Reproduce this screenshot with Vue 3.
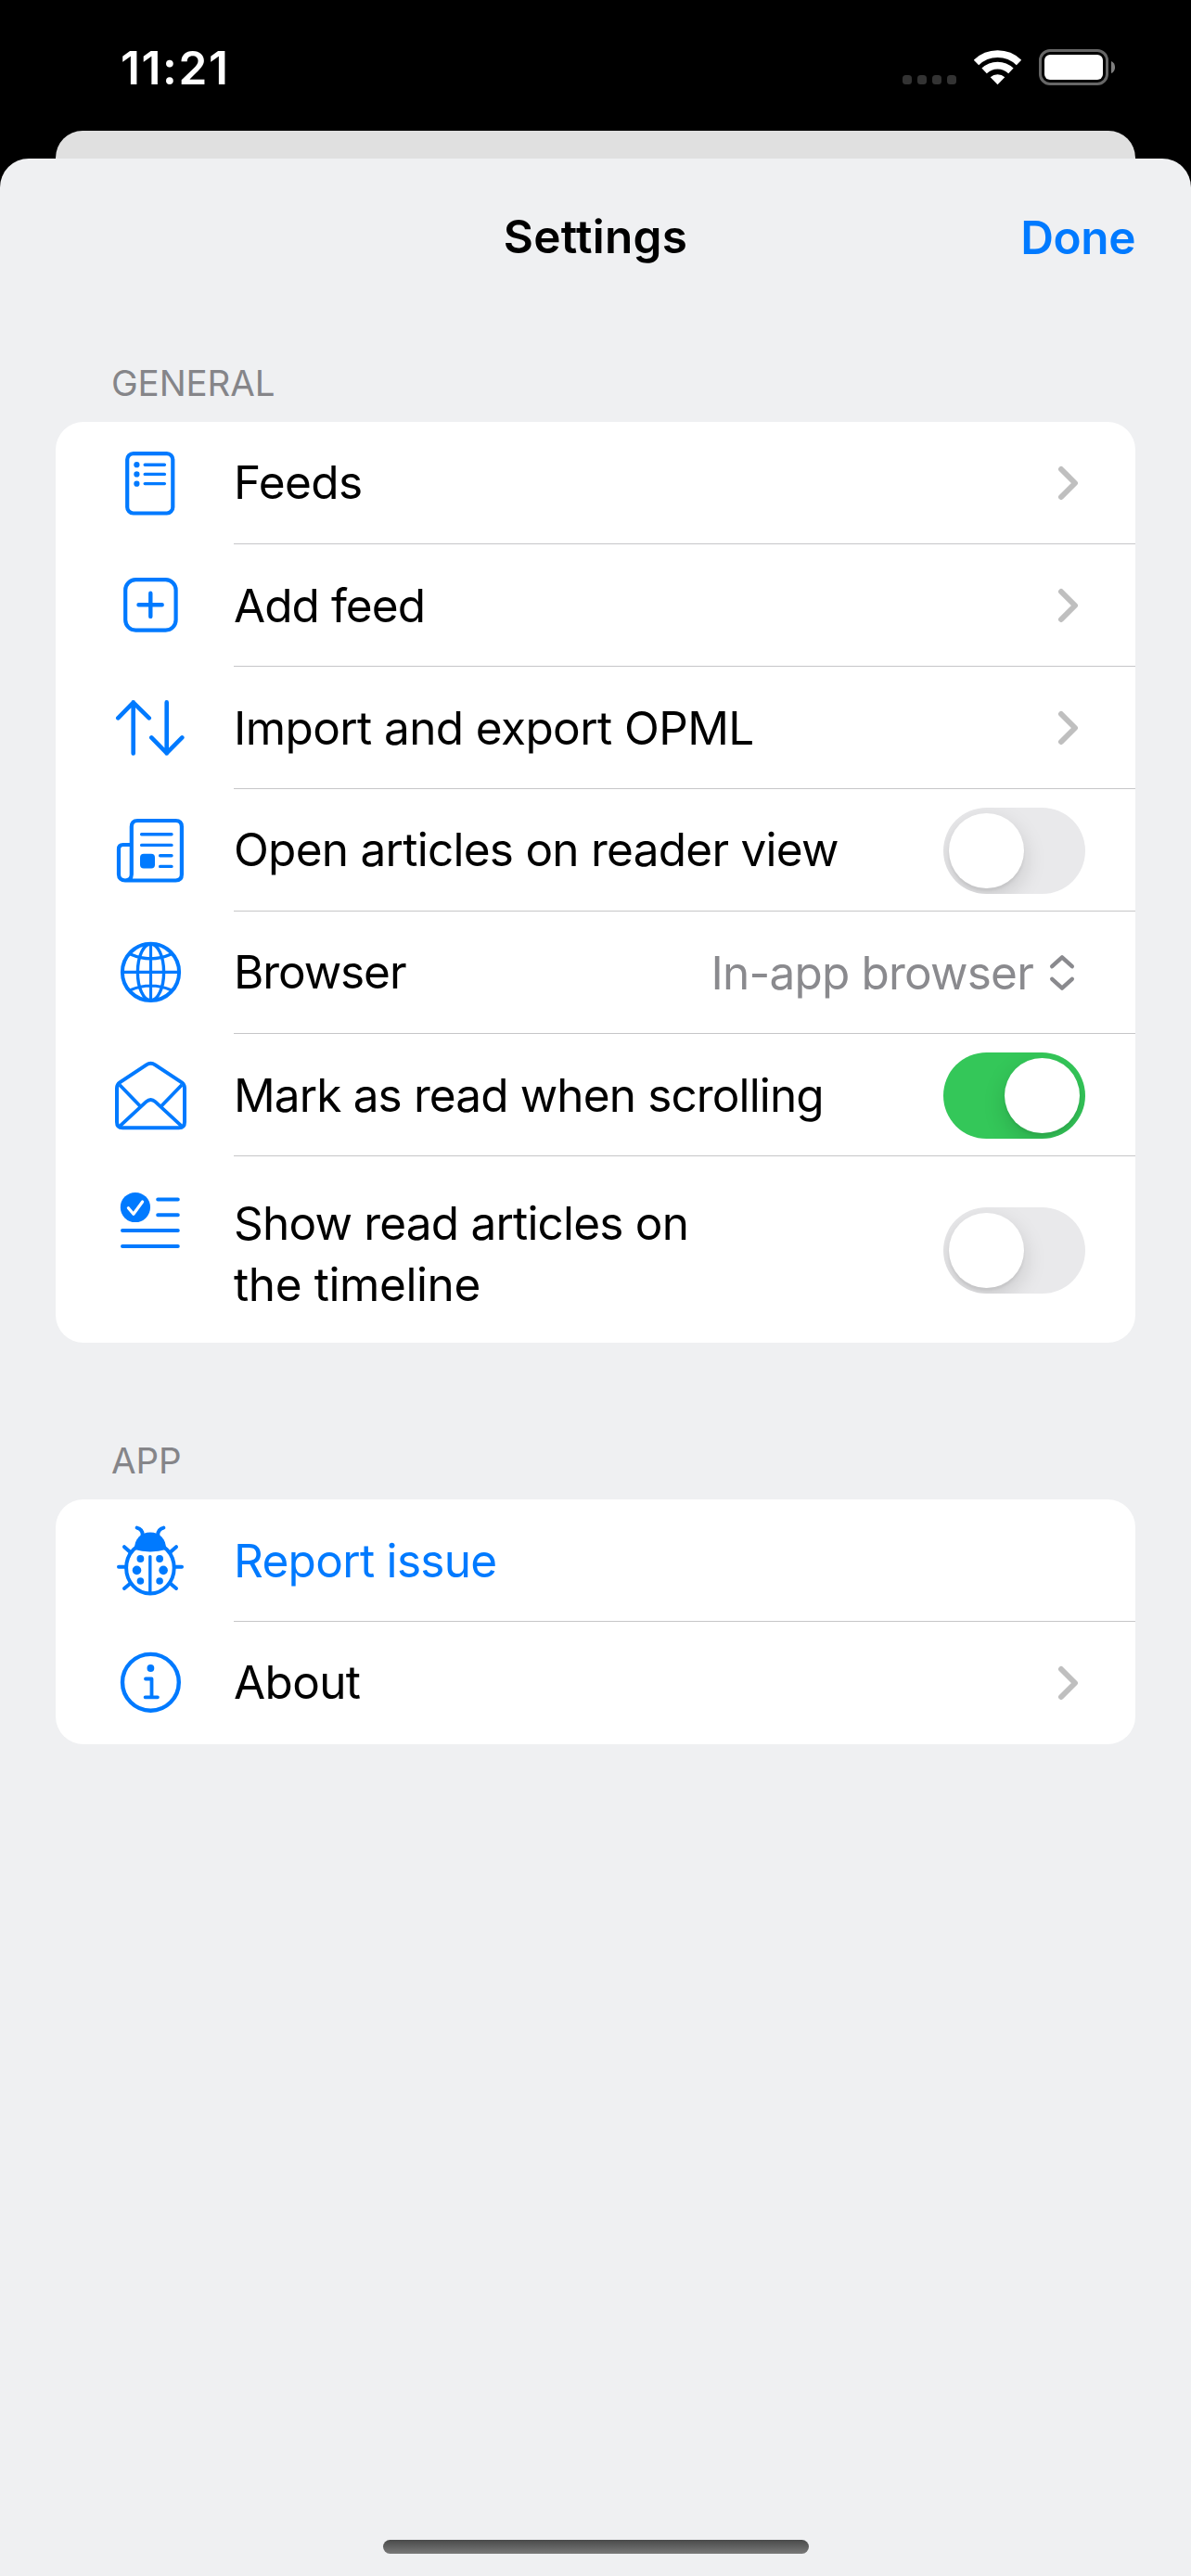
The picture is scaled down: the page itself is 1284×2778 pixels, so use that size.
<script setup>
const sections = [
  {
    title: 'GENERAL',
    titleClass: 't-general',
    rows: [
      { icon: 'feeds', lines: ['Feeds'], cls: 'l-feeds', kind: 'link' },
      { icon: 'add', lines: ['Add feed'], cls: 'l-add', kind: 'link' },
      { icon: 'arrows', lines: ['Import and export OPML'], cls: 'l-import', kind: 'link' },
      { icon: 'news', lines: ['Open articles on reader view'], cls: 'l-open', kind: 'toggle', on: false },
      { icon: 'globe', lines: ['Browser'], cls: 'l-browser', kind: 'picker', value: 'In-app browser' },
      { icon: 'mail', lines: ['Mark as read when scrolling'], cls: 'l-mark', kind: 'toggle', on: true },
      { icon: 'list', lines: ['Show read articles on', 'the timeline'], cls: 'l-show', kind: 'toggle', on: false, tall: true },
    ],
  },
  {
    title: 'APP',
    titleClass: 't-app',
    rows: [
      { icon: 'bug', lines: ['Report issue'], cls: 'l-report', kind: 'action' },
      { icon: 'info', lines: ['About'], cls: 'l-about', kind: 'link' },
    ],
  },
]
</script>

<template>
  <div class="screen">
    <header class="status">
      <span class="time">11:21</span>
      <div class="signals">
        <div class="dots"><i v-for="n in 4" :key="n"></i></div>
        <svg class="wifi" width="52" height="38" viewBox="0 0 52 38" fill="none" stroke="#fff" stroke-width="7.8">
          <path d="M2.5 13.5A33.1 33.1 0 0 1 48.5 13.5M11.1 22.4A20.7 20.7 0 0 1 39.9 22.4" />
          <path d="M25.5 37.3L17.7 29.2A11.5 11.5 0 0 1 33.3 29.2Z" fill="#fff" stroke="none" />
        </svg>
        <div class="battery"><div class="charge"></div></div>
        <svg class="nub" width="4" height="13" viewBox="0 0 4 13"><path d="M0 0C5.4 2 5.4 11 0 13Z" fill="#7f7f7f" /></svg>
      </div>
    </header>
    <div class="behind"></div>
    <main class="sheet">
      <nav class="bar">
        <span></span>
        <h1>Settings</h1>
        <a class="done">Done</a>
      </nav>
      <section v-for="s in sections" :key="s.title">
        <h2 :class="s.titleClass">{{ s.title }}</h2>
        <div class="card">
          <div v-for="r in s.rows" :key="r.cls" class="row" :class="{ tall: r.tall }">
            <svg class="icon" width="80" height="80" viewBox="0 0 80 80" fill="none" stroke="#007aff" stroke-width="4.2" stroke-linecap="round" stroke-linejoin="round">
              <template v-if="r.icon === 'feeds'">
                <rect x="15.2" y="8.1" width="49.1" height="64.4" rx="6.5" />
                <path d="M34.2 20.3H55.4M34.2 30.4H55.4M34.2 40.6H55.4" stroke-width="3.4" />
                <g fill="#007aff" stroke="none"><circle cx="25.4" cy="20.2" r="3.1" /><circle cx="25.4" cy="30.4" r="3.1" /><circle cx="25.4" cy="40.7" r="3.1" /></g>
              </template>
              <template v-else-if="r.icon === 'add'">
                <rect x="13.2" y="12.2" width="54.4" height="54.4" rx="11" />
                <path d="M27.5 39.3H52.7M40.3 26.8V51.9" stroke-width="4.4" />
              </template>
              <template v-else-if="r.icon === 'arrows'">
                <path d="M21.7 67.5V12.4M5.3 29.4L21.7 12.6L38.7 29.4M57.7 12.4V67.5M41.3 50.4L57.7 67.2L74.3 50.4" stroke-width="4.6" />
              </template>
              <template v-else-if="r.icon === 'news'">
                <path d="M19.8 66V14.5Q19.8 8 26.3 8H67.4Q73.9 8 73.9 14.5V66Q73.9 72.5 67.4 72.5H13C8.9 72.5 6 70 6 66V38.6Q6 34 10.6 34H19.8M19.8 66C19.8 70 17 72.5 13 72.5" />
                <path d="M30.6 22.8H63M30.6 34.4H63M50.6 45.8H63M50.6 57.4H63" stroke-width="3.4" />
                <rect x="29" y="43.8" width="16" height="15.6" rx="4" fill="#007aff" stroke="none" />
              </template>
              <template v-else-if="r.icon === 'globe'">
                <circle cx="40.5" cy="39.4" r="30.6" stroke-width="4" />
                <ellipse cx="40.5" cy="39.4" rx="14.1" ry="30.4" stroke-width="3.4" />
                <path d="M10 39.4H71M40.5 9V70M18.5 20Q40.5 29.6 62.5 20M18.5 58.8Q40.5 49.2 62.5 58.8" stroke-width="3.2" />
              </template>
              <template v-else-if="r.icon === 'mail'">
                <path d="M35.8 7.4Q40.5 4.2 45.2 7.4L73.6 26.2Q77 28.5 77 32.5V69Q77 75.2 70.8 75.2H10.2Q4 75.2 4 69V32.5Q4 28.5 7.4 26.2Z" stroke-width="4" />
                <path d="M7 29L29 51.7M74 29L52 51.7M7.5 73.2L35.6 47.2Q40.5 42.8 45.4 47.2L73.5 73.2" stroke-width="3.8" stroke-linecap="butt" />
              </template>
              <template v-else-if="r.icon === 'list'">
                <circle cx="23.9" cy="29" r="16.1" fill="#007aff" stroke="none" />
                <path d="M16.4 29.8L21.9 36.2L31.6 23" stroke="#fff" stroke-width="3.2" />
                <path d="M48.2 20.4H69.8M48.2 37.3H69.8M10 54.1H69.8M10 71H69.8" stroke-width="4" />
              </template>
              <template v-else-if="r.icon === 'bug'">
                <ellipse cx="39.9" cy="47.8" rx="25.8" ry="27.6" stroke-width="4" />
                <path d="M23 28C22.6 16.5 30 9.4 40 9.4S57.4 16.5 57 28Q49 30.4 40 30.4T23 28Z" fill="#007aff" stroke="none" />
                <path d="M25.6 4.6Q31.6 6.2 31.7 12M54.4 4.6Q48.4 6.2 48.2 12M12 25.2L18 30.6M68 25.2L62 30.6M6 46.7H13M74 46.7H67M12 70L18 65M68 70L62 65" stroke-width="4" />
                <path d="M39.8 35.6V74" stroke-width="3.4" />
                <g fill="#007aff" stroke="none">
                  <circle cx="29.4" cy="38" r="3.9" /><circle cx="50.1" cy="38" r="3.9" />
                  <circle cx="25.5" cy="50.4" r="4.8" /><circle cx="54.1" cy="50.4" r="4.8" />
                  <circle cx="29.4" cy="62" r="3.8" /><circle cx="50.1" cy="62" r="3.8" />
                </g>
              </template>
              <template v-else>
                <circle cx="40.4" cy="39.3" r="30.4" stroke-width="4.4" />
                <circle cx="40.4" cy="24" r="3.9" fill="#007aff" stroke="none" />
                <path d="M35 35.5H41.5V55.3M34.6 55.3H47.9" stroke-width="3.8" />
              </template>
            </svg>
            <div class="body">
              <span class="label" :class="[r.cls, { action: r.kind === 'action' }]"><span v-for="line in r.lines" :key="line" class="line">{{ line }}</span></span>
              <svg v-if="r.kind === 'link'" class="chevron" width="24" height="38" viewBox="0 0 24 38" fill="none" stroke="#bfbfbf" stroke-width="6" stroke-linecap="round" stroke-linejoin="round">
                <path d="M4 4L19 19L4 34" />
              </svg>
              <div v-else-if="r.kind === 'toggle'" class="toggle" :class="{ on: r.on }"><div class="knob"></div></div>
              <div v-else-if="r.kind === 'picker'" class="picker">
                <span>{{ r.value }}</span>
                <svg width="28" height="40" viewBox="0 0 28 40" fill="none" stroke="#8a8a8e" stroke-width="4.4" stroke-linecap="round" stroke-linejoin="round">
                  <path d="M3.2 13.2L14 3.4L24.8 13.2M3.2 26.8L14 36.6L24.8 26.8" />
                </svg>
              </div>
            </div>
          </div>
        </div>
      </section>
      <div class="home"></div>
    </main>
  </div>
</template>

<style>
body {
  background: #000;
}
</style>

<style scoped>
.screen {
  display: flex;
  flex-direction: column;
  box-sizing: border-box;
  width: 1284px;
  height: 2778px;
  overflow: hidden;
  background: #000;
  font-family: Inter, 'Liberation Sans', sans-serif;
  color: #000;
}
.status {
  display: flex;
  justify-content: space-between;
  height: 141px;
  color: #fff;
}
.time {
  margin-left: 130px;
  font-size: 49.5px;
  font-weight: 600;
  line-height: 146px;
  letter-spacing: 1.6px;
}
.signals {
  display: flex;
  align-items: flex-start;
  padding: 53px 82px 0 0;
}
.dots {
  display: flex;
  gap: 6px;
  margin: 28px 19px 0 0;
}
.dots i {
  width: 10px;
  height: 10px;
  border-radius: 3.5px;
  background: #333;
}
.wifi {
  margin: 1px 18px 0 0;
}
.battery {
  box-sizing: border-box;
  width: 75px;
  height: 39px;
  padding: 3px;
  border: 3px solid #666;
  border-radius: 12px;
}
.charge {
  height: 27px;
  border-radius: 6px;
  background: #fff;
}
.nub {
  margin: 13px 0 0 3px;
}
.behind {
  flex: none;
  height: 30px;
  margin: 0 60px;
  border-radius: 29px 29px 0 0;
  background: #e0e0e0;
}
.sheet {
  display: flex;
  flex: 1;
  flex-direction: column;
  border-radius: 31px 31px 0 0;
  background: #eff0f2;
}
.bar {
  display: grid;
  grid-template-columns: 1fr auto 1fr;
  align-items: center;
  height: 168px;
  padding: 0 60px;
}
h1 {
  margin: 0;
  font-size: 49.5px;
  font-weight: 600;
  letter-spacing: 0.25px;
  line-height: 168px;
}
.done {
  justify-self: end;
  padding-top: 1px;
  color: #007aff;
  font-size: 49.5px;
  font-weight: 600;
  letter-spacing: -0.4px;
}
h2 {
  height: 116px;
  margin: 0;
  padding-left: 120px;
  color: #858589;
  font-size: 38.5px;
  font-weight: 400;
  letter-spacing: -0.1px;
  line-height: 148px;
}
section + section h2 {
  height: 169px;
  line-height: 255px;
}
.card {
  margin: 0 60px;
  border-radius: 30px;
  background: #fff;
}
.row {
  display: flex;
  height: 132px;
}
.icon {
  flex: none;
  margin: 26px 50px 0 62px;
}
.body {
  display: flex;
  flex: 1;
  align-items: center;
  justify-content: space-between;
  border-bottom: 1px solid #c6c6c8;
}
.row.tall {
  height: 201px;
}
.row:last-child .body {
  border-bottom: 0;
}
.label {
  font-size: 49.5px;
  line-height: 66px;
  white-space: nowrap;
}
.line {
  display: block;
}
.tall .label {
  padding-top: 8px;
}
.l-feeds {
  padding-bottom: 2px;
  letter-spacing: -0.6px;
}
.l-add {
  letter-spacing: -0.95px;
}
.l-import {
  letter-spacing: -0.6px;
}
.l-open {
  padding-bottom: 2px;
  letter-spacing: -0.74px;
}
.l-browser {
  padding-bottom: 2px;
  letter-spacing: -1.1px;
}
.l-mark {
  letter-spacing: -0.87px;
}
.l-show {
  letter-spacing: -0.8px;
}
.l-show .line:last-child {
  letter-spacing: -0.4px;
}
.l-report {
  letter-spacing: -0.7px;
}
.l-about {
  padding-bottom: 2px;
  letter-spacing: -0.65px;
}
.action {
  color: #007aff;
}
.chevron {
  margin-right: 60px;
}
.toggle {
  box-sizing: border-box;
  width: 153px;
  height: 93px;
  margin: 1px 54px 0 0;
  padding: 6px;
  overflow: hidden;
  border-radius: 47px;
  background: #e9e9eb;
}
.knob {
  width: 81px;
  height: 81px;
  border-radius: 50%;
  background: #fff;
  box-shadow: 0 9px 24px rgba(0, 0, 0, 0.15), 0 3px 3px rgba(0, 0, 0, 0.06);
}
.on {
  background: #34c759;
}
.on .knob {
  margin-left: 60px;
}
.picker {
  display: flex;
  align-items: center;
  gap: 17px;
  margin-right: 65px;
  color: #8a8a8e;
  font-size: 49.5px;
  letter-spacing: -0.8px;
  line-height: 66px;
}
.home {
  width: 459px;
  height: 15px;
  margin: auto auto 24px;
  border-radius: 8px;
  background: linear-gradient(#494a4a, #797979);
}
</style>
